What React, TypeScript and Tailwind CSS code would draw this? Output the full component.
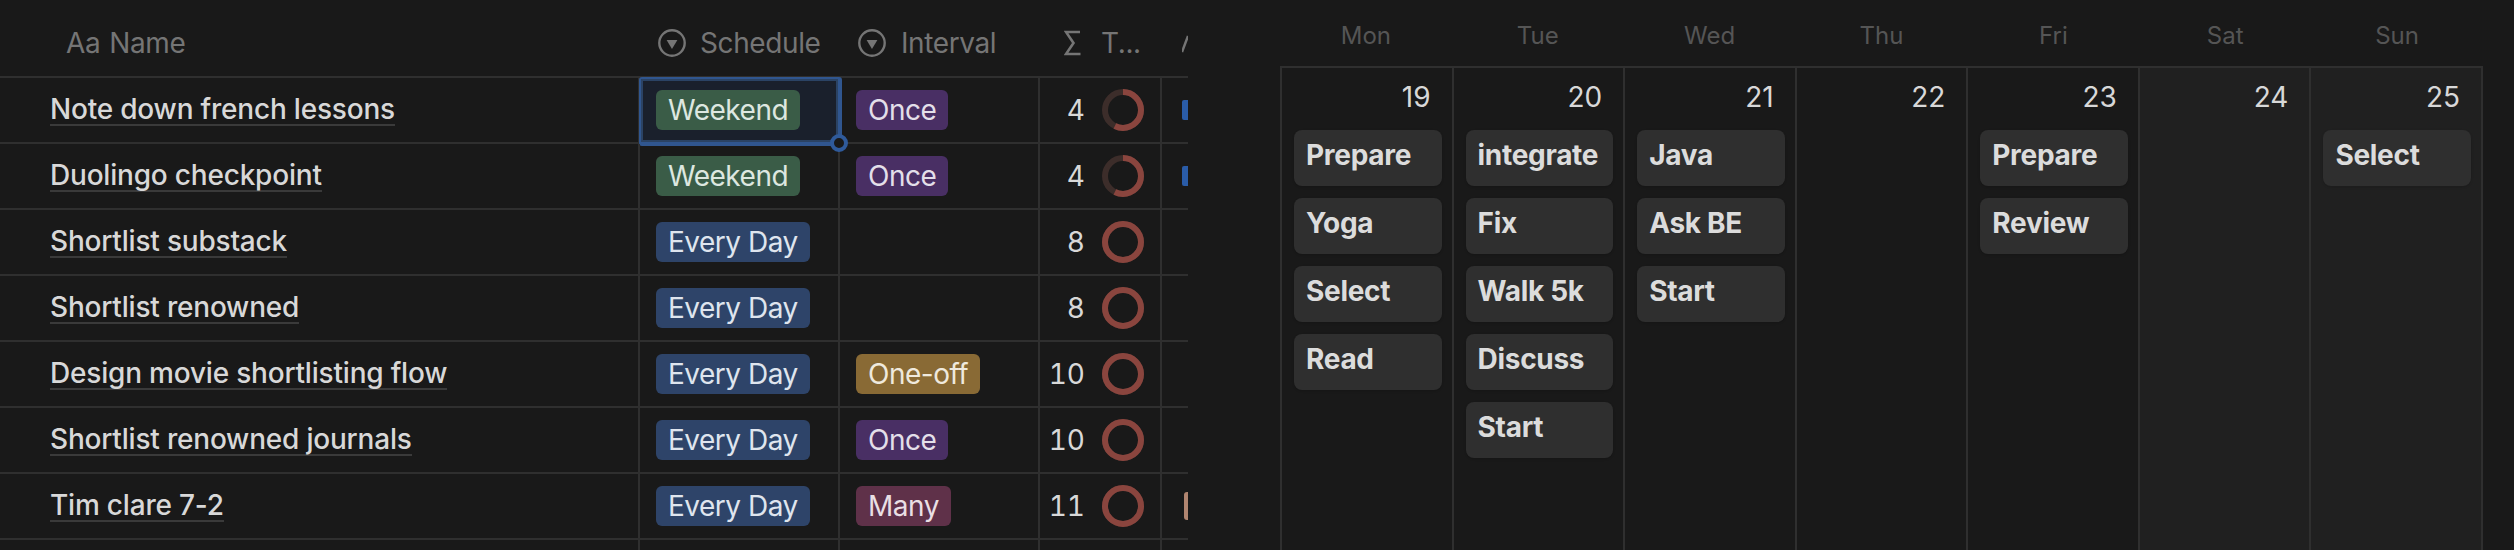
const rows = [
  { name: 'Note down french lessons', schedule: 'Weekend', interval: 'Once', total: 4, progress: 4 / 7, edge: 'blue', selected: true },
  { name: 'Duolingo checkpoint', schedule: 'Weekend', interval: 'Once', total: 4, progress: 4 / 7, edge: 'blue' },
  { name: 'Shortlist substack', schedule: 'Every Day', interval: '', total: 8, progress: 1 },
  { name: 'Shortlist renowned', schedule: 'Every Day', interval: '', total: 8, progress: 1 },
  { name: 'Design movie shortlisting flow', schedule: 'Every Day', interval: 'One-off', total: 10, progress: 1 },
  { name: 'Shortlist renowned journals', schedule: 'Every Day', interval: 'Once', total: 10, progress: 1 },
  { name: 'Tim clare 7-2', schedule: 'Every Day', interval: 'Many', total: 11, progress: 1, edge: 'tan' },
];

const pillColors: Record<string, string> = {
  Weekend: 'bg-[#3a5c47] text-[#dde7e0]',
  'Every Day': 'bg-[#2e4469] text-[#dfe5ee]',
  Once: 'bg-[#492f64] text-[#e3dfe9]',
  'One-off': 'bg-[#896a35] text-[#efe9dd]',
  Many: 'bg-[#5f3149] text-[#e9dfe4]',
};

const days = [
  { label: 'Mon', date: 19, items: ['Prepare', 'Yoga', 'Select', 'Read'] },
  { label: 'Tue', date: 20, items: ['integrate', 'Fix', 'Walk 5k', 'Discuss', 'Start'] },
  { label: 'Wed', date: 21, items: ['Java', 'Ask BE', 'Start'] },
  { label: 'Thu', date: 22, items: [] },
  { label: 'Fri', date: 23, items: ['Prepare', 'Review'] },
  { label: 'Sat', date: 24, items: [], weekend: true },
  { label: 'Sun', date: 25, items: ['Select'], weekend: true },
];

function SelectIcon() {
  return (
    <svg width="28" height="28" viewBox="0 0 28 28" className="shrink-0" fill="none">
      <circle cx="14" cy="14" r="12.7" stroke="#757575" strokeWidth="2.4" />
      <path d="M8.6 11h10.8L14 20z" fill="#757575" />
    </svg>
  );
}

function SigmaIcon() {
  return (
    <svg width="17" height="26" viewBox="0 0 17 26" className="shrink-0" fill="none">
      <path d="M16 2H2l7.5 11L2 24h14.5" stroke="#757575" strokeWidth="2.6" />
    </svg>
  );
}

function Donut({ progress }: { progress: number }) {
  const radius = 18;
  const length = 2 * Math.PI * radius;
  return (
    <svg width="42" height="42" viewBox="0 0 42 42" className="-rotate-90 shrink-0" fill="none">
      <circle cx="21" cy="21" r={radius} stroke="#3c2d2a" strokeWidth="6" />
      <circle
        cx="21"
        cy="21"
        r={radius}
        stroke="#8a453e"
        strokeWidth="6"
        strokeDasharray={`${length * progress} ${length}`}
      />
    </svg>
  );
}

function Pill({ text }: { text: string }) {
  return (
    <span className={`flex h-10 items-center rounded-md px-3 text-[28px] leading-none tracking-[-0.5px] ${pillColors[text]}`}>
      {text}
    </span>
  );
}

function TaskTable() {
  return (
    <div className="w-[1188px] shrink-0">
      <div className="flex h-[78px] items-center border-b-2 border-[#2f2f2f] pt-[10px] text-[28px] tracking-[-0.4px] text-[#757575]">
        <div className="flex w-[638px] gap-[9px] pl-[66px]">
          <span>Aa</span>
          <span>Name</span>
        </div>
        <div className="flex w-[200px] items-center gap-[14px] pl-5">
          <SelectIcon />
          <span>Schedule</span>
        </div>
        <div className="flex w-[200px] items-center gap-[15px] pl-5">
          <SelectIcon />
          <span>Interval</span>
        </div>
        <div className="flex w-[122px] items-center gap-[20px] pl-[26px]">
          <SigmaIcon />
          <span>T...</span>
        </div>
        <div className="h-[26px] w-[28px] overflow-hidden pl-[22px]">
          <svg width="6" height="26" viewBox="0 0 6 26" fill="none">
            <path d="M6 6 0 22" stroke="#757575" strokeWidth="2.4" />
          </svg>
        </div>
      </div>
      {rows.map((row) => (
        <div key={row.name} className="flex h-[66px] border-b-2 border-[#2f2f2f]">
          <div className="flex w-[638px] items-center pl-[50px]">
            <span className="border-b-2 border-[#3a3a3a] text-[28px] leading-[30px] font-medium tracking-[-0.2px] text-[#d8d8d8]">
              {row.name}
            </span>
          </div>
          <div
            className={`relative flex w-[200px] items-center border-l-2 border-[#2f2f2f] pl-4 ${
              row.selected ? 'bg-[#1a202c]' : ''
            }`}
          >
            <Pill text={row.schedule} />
            {row.selected && (
              <>
                <div className="absolute -top-px -right-1 -bottom-1 -left-px rounded-[3px] border-t-2 border-r-4 border-b-4 border-l-2 border-[#30568f] shadow-[inset_0_0_0_2px_#2b4364]" />
                <div className="absolute -right-[10px] -bottom-[10px] h-[18px] w-[18px] rounded-full border-4 border-[#2f5a9a] bg-[#191919]" />
              </>
            )}
          </div>
          <div className="flex w-[200px] items-center border-l-2 border-[#2f2f2f] pl-4">
            {row.interval && <Pill text={row.interval} />}
          </div>
          <div className="flex w-[122px] items-center justify-end gap-[17px] border-l-2 border-[#2f2f2f] pr-[16px] text-[28px] text-[#d8d8d8] tabular-nums">
            <span>{row.total}</span>
            <Donut progress={row.progress} />
          </div>
          <div className="flex w-[28px] items-center justify-end border-l-2 border-[#2f2f2f]">
            {row.edge === 'blue' && <div className="h-5 w-[6px] rounded-l-[2px] bg-[#2a5ca8]" />}
            {row.edge === 'tan' && <div className="h-7 w-1 rounded-l-[3px] bg-[#b08570]" />}
          </div>
        </div>
      ))}
      <div className="flex h-3">
        <div className="w-[638px]" />
        <div className="w-[200px] border-l-2 border-[#2f2f2f]" />
        <div className="w-[200px] border-l-2 border-[#2f2f2f]" />
        <div className="w-[122px] border-l-2 border-[#2f2f2f]" />
        <div className="w-[28px] border-l-2 border-[#2f2f2f]" />
      </div>
    </div>
  );
}

function WeekCalendar() {
  return (
    <div className="ml-[92px] flex h-[550px] w-[1203px] shrink-0 flex-col">
      <div className="grid h-[66px] shrink-0 grid-cols-7">
        {days.map((day) => (
          <div key={day.label} className="flex items-center justify-center pt-[6px] text-2xl text-[#555555]">
            {day.label}
          </div>
        ))}
      </div>
      <div className="grid flex-1 grid-cols-7 border-t-2 border-r-2 border-[#2f2f2f]">
        {days.map((day) => (
          <div
            key={day.label}
            className={`border-l-2 border-[#2f2f2f] pr-[10px] pl-3 ${day.weekend ? 'bg-[#202020]' : ''}`}
          >
            <div className="flex h-[62px] items-center justify-end pr-[11px] pb-[4px] text-[28px] text-[#d8d8d8]">
              {day.date}
            </div>
            <div className="flex flex-col gap-3">
              {day.items.map((item, index) => (
                <div
                  key={index}
                  className="h-14 rounded-lg bg-[#2f2f2f] pt-[7px] pl-3 text-[28px] leading-9 font-bold tracking-[-0.3px] text-[#dcdcdc] shadow-sm"
                >
                  {item}
                </div>
              ))}
            </div>
          </div>
        ))}
      </div>
    </div>
  );
}

export default function App() {
  return (
    <div className="flex h-[550px] w-[2514px] overflow-hidden bg-[#191919] font-['Inter',sans-serif]">
      <TaskTable />
      <WeekCalendar />
    </div>
  );
}
